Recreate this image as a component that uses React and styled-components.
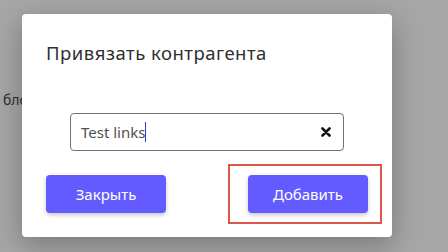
import React from 'react';
import styled, { createGlobalStyle } from 'styled-components';

const GlobalStyle = createGlobalStyle`
  html, body {
    margin: 0;
    padding: 0;
    width: 448px;
    height: 252px;
    overflow: hidden;
    background: #a6a6a6;
    font-family: "Noto Sans", "Liberation Sans", sans-serif;
  }
`;

const Page = styled.div`
  position: relative;
  width: 448px;
  height: 252px;
`;

const BackText = styled.div`
  padding: 90px 0 0 3px;
  font-size: 14px;
  color: #2c2c2c;
`;

const Modal = styled.div`
  position: absolute;
  left: 22px;
  top: 14px;
  width: 370px;
  height: 223px;
  box-sizing: border-box;
  background: #fff;
  border-radius: 4px;
  box-shadow: 0 8px 28px rgba(0, 0, 0, 0.28);
  padding: 27px 24px 0 24px;
  display: flex;
  flex-direction: column;
`;

const Title = styled.h2`
  margin: 0;
  font-size: 18.5px;
  line-height: 24px;
  letter-spacing: 0.5px;
  font-weight: 400;
  color: #303030;
`;

const Field = styled.div`
  margin: 48px 24px 0 24px;
  height: 38px;
  box-sizing: border-box;
  border: 1px solid #70707c;
  border-radius: 4px;
  display: flex;
  align-items: center;
  padding: 0 12px 0 10px;
`;

const Value = styled.span`
  font-size: 15px;
  color: #505050;
  border-right: 1px solid #2b3fd0;
  line-height: 20px;
`;

const Clear = styled.button`
  margin-left: auto;
  border: 0;
  background: none;
  padding: 0;
  display: flex;
  cursor: pointer;
`;

const Actions = styled.div`
  margin-top: 24px;
  display: flex;
  justify-content: space-between;
`;

const Highlight = styled.div`
  position: relative;
  &::after {
    content: '';
    position: absolute;
    inset: -11px -14px -11px -20px;
    border: 2px solid #d9574b;
    pointer-events: none;
  }
`;

const Button = styled.button`
  width: 120px;
  height: 38px;
  border: 0;
  border-radius: 4px;
  background: #635bff;
  color: #fff;
  font-family: inherit;
  font-size: 15px;
  box-shadow: 0 2px 4px rgba(0, 0, 0, 0.22);
  cursor: pointer;
`;

const CrossIcon = () => (
  <svg width="10" height="10" viewBox="0 0 10 10">
    <path d="M1.5 1.5 L8.5 8.5 M8.5 1.5 L1.5 8.5" stroke="#111" strokeWidth="2.6" strokeLinecap="round" />
  </svg>
);

export default function App() {
  return (
    <Page>
      <GlobalStyle />
      <BackText>бло</BackText>
      <Modal>
        <Title>Привязать контрагента</Title>
        <Field>
          <Value>Test links</Value>
          <Clear aria-label="clear">
            <CrossIcon />
          </Clear>
        </Field>
        <Actions>
          <Button>Закрыть</Button>
          <Highlight>
            <Button>Добавить</Button>
          </Highlight>
        </Actions>
      </Modal>
    </Page>
  );
}
